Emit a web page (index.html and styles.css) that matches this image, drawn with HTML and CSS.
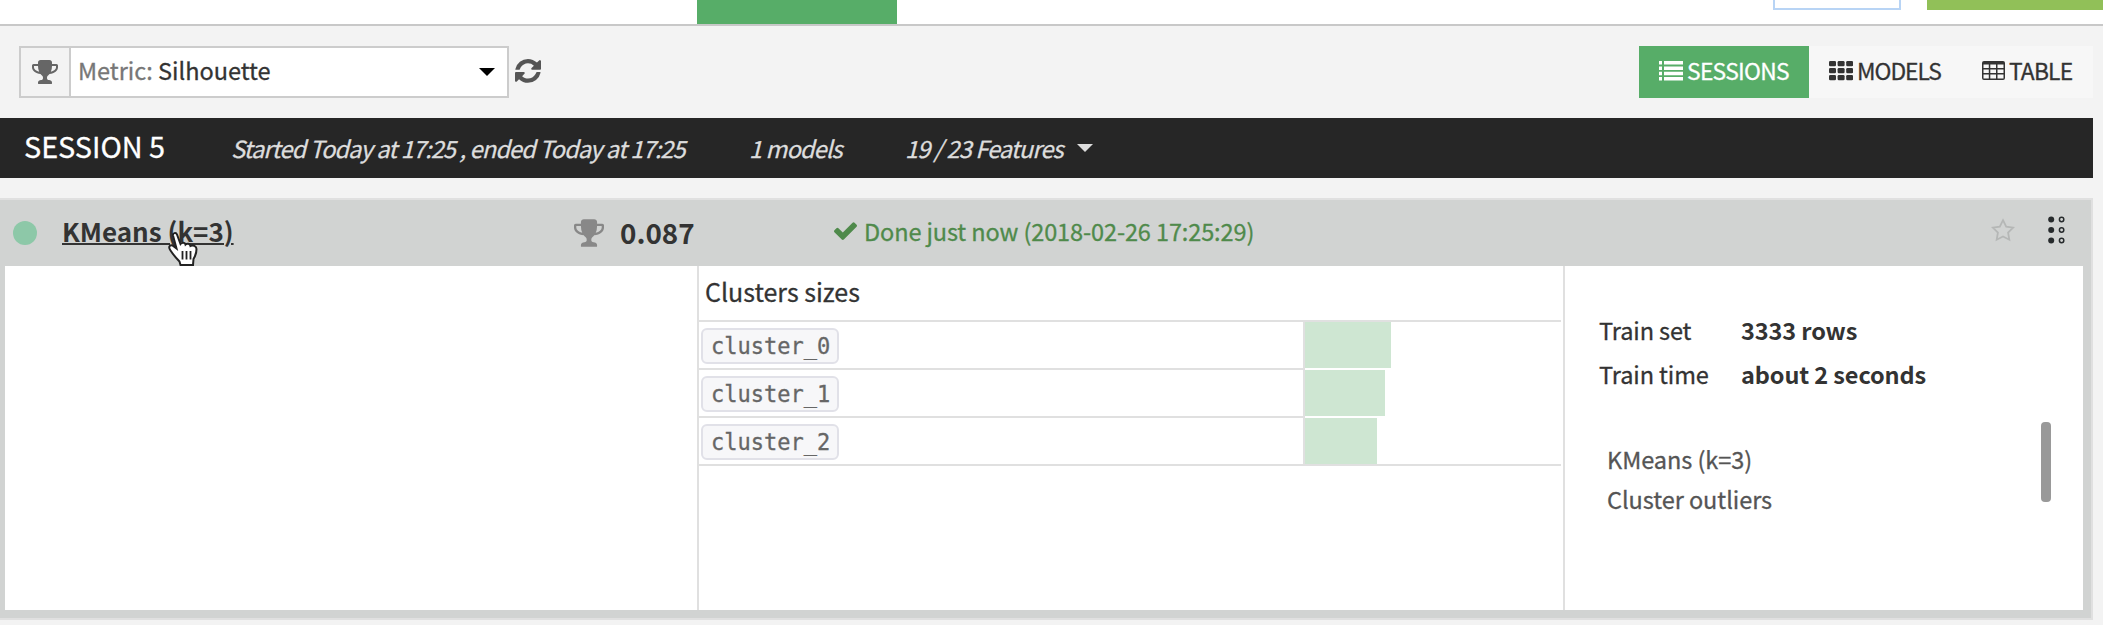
FILE: index.html
```html
<!DOCTYPE html>
<html lang="en">
<head>
<meta charset="utf-8">
<title>Sessions</title>
<link rel="stylesheet" href="styles.css">
</head>
<body>
<svg class="defs" width="0" height="0">
  <symbol id="trophy" viewBox="0 128 1664 1536"><path d="M458 883q-74-162-74-371h-256v96q0 78 94.500 162t235.500 113zM1536 608v-96h-256q0 209-74 371 141-29 235.500-113t94.500-162zM1664 480v128q0 71-41.500 143t-112 130-173 97.500-215.500 44.500q-42 54-95 95-38 34-52.500 72.500t-14.500 89.500q0 54 30.500 91t97.500 37q75 0 133.500 45.500t58.500 114.500v64q0 14-9 23t-23 9h-832q-14 0-23-9t-9-23v-64q0-69 58.500-114.500t133.500-45.500q67 0 97.500-37t30.500-91q0-51-14.500-89.500t-52.500-72.500q-53-41-95-95-113-5-215.500-44.500t-173-97.500-112-130-41.500-143v-128q0-40 28-68t68-28h288v-96q0-66 47-113t113-47h576q66 0 113 47t47 113v96h288q40 0 68 28t28 68z"/></symbol>
</svg>
<header class="topbar">
  <div class="tab"></div>
  <div class="outline-btn"></div>
  <div class="train-btn"></div>
</header>
<div class="toolbar">
  <div class="metric">
    <div class="metric-icon"><svg class="trophy-sm"><use href="#trophy"/></svg></div>
    <div class="metric-select"><span class="metric-text"><span class="muted">Metric:</span> Silhouette</span><span class="caret dark"></span></div>
  </div>
  <svg class="refresh" viewBox="0 128 1536 1536"><path d="M1511 928q0 5-1 7-64 268-268 434.500t-478 166.500q-146 0-282.500-55t-243.500-157l-129 129q-19 19-45 19t-45-19-19-45v-448q0-26 19-45t45-19h448q26 0 45 19t19 45-19 45l-137 137q71 66 161 102t187 36q134 0 250-65t186-179q11-17 53-117 8-23 30-23h192q13 0 22.500 9.500t9.500 22.500zM1536 256v448q0 26-19 45t-45 19h-448q-26 0-45-19t-19-45 19-45l138-138q-148-137-349-137-134 0-250 65t-186 179q-11 17-53 117-8 23-30 23h-199q-13 0-22.500-9.500t-9.500-22.500v-7q65-268 270-434.500t480-166.500q146 0 284 55.500t245 156.500l130-129q19-19 45-19t45 19 19 45z"/></svg>
  <nav class="views">
    <div class="view v-sessions active"><svg width="24" height="20" viewBox="0 0 24 20"><path d="M0 0h3v3.500H0zM5 0h19v3.500H5zM0 5.500h3V9H0zM5 5.500h19V9H5zM0 10.800h3v3.500H0zM5 10.800h19v3.500H5zM0 16h3v3.500H0zM5 16h19v3.500H5z"/></svg><span>SESSIONS</span></div>
    <div class="view v-models"><svg width="24" height="20" viewBox="0 0 24 20"><rect width="7" height="5.200" rx="1.300"/><rect x="8.600" width="7" height="5.200" rx="1.300"/><rect x="17.200" width="7" height="5.200" rx="1.300"/><rect y="7" width="7" height="5.200" rx="1.300"/><rect x="8.600" y="7" width="7" height="5.200" rx="1.300"/><rect x="17.200" y="7" width="7" height="5.200" rx="1.300"/><rect y="14" width="7" height="5.200" rx="1.300"/><rect x="8.600" y="14" width="7" height="5.200" rx="1.300"/><rect x="17.200" y="14" width="7" height="5.200" rx="1.300"/></svg><span>MODELS</span></div>
    <div class="view v-table"><svg width="23" height="20" viewBox="0 0 23 20"><path d="M2 0h19a2 2 0 0 1 2 2v15a2 2 0 0 1-2 2H2a2 2 0 0 1-2-2V2a2 2 0 0 1 2-2zM1.500 3.500v3.400h5.300V3.500zM8.300 3.500v3.400h5.700V3.500zM15.500 3.500v3.400h6V3.500zM1.500 8.400v3.500h5.300V8.400zM8.300 8.400v3.500h5.700V8.400zM15.500 8.400v3.500h6V8.400zM1.500 13.400v4h5.300v-4zM8.300 13.400v4h5.700v-4zM15.500 13.400v4h6v-4z" fill-rule="evenodd"/></svg><span>TABLE</span></div>
  </nav>
</div>
<div class="session">
  <span class="s-title">SESSION 5</span>
  <span class="s-time">Started Today at 17:25 , ended Today at 17:25</span>
  <span class="s-models">1 models</span>
  <span class="s-features">19 / 23 Features</span>
  <span class="caret light"></span>
</div>
<section class="card">
  <div class="card-head">
    <span class="dot"></span>
    <a class="name">KMeans (k=3)</a>
    <svg class="trophy-lg"><use href="#trophy"/></svg>
    <span class="score">0.087</span>
    <svg class="check" viewBox="121 310 1550 1212" preserveAspectRatio="none"><path d="M1671 566q0 40-28 68l-724 724-136 136q-28 28-68 28t-68-28l-136-136-362-362q-28-28-28-68t28-68l136-136q28-28 68-28t68 28l294 295 656-657q28-28 68-28t68 28l136 136q28 28 28 68z"/></svg>
    <span class="done">Done just now (2018-02-26 17:25:29)</span>
    <svg class="star" viewBox="0 0 24 24"><path d="M12 2.200l3.200 6.400 7 1-5.100 5 1.200 7.100-6.300-3.300-6.300 3.300 1.200-7.100-5.100-5 7-1z"/></svg>
    <svg class="grip" viewBox="0 0 17 28"><g class="solid"><circle cx="3.200" cy="3.500" r="3"/><circle cx="3.200" cy="14" r="3"/><circle cx="3.200" cy="24.500" r="3"/></g><g class="hollow"><circle cx="13.600" cy="3.500" r="2.200"/><circle cx="13.600" cy="14" r="2.200"/><circle cx="13.600" cy="24.500" r="2.200"/></g></svg>
    <svg class="cursor" viewBox="0 0 32 38"><path d="M6 5.500C5.500 3 9 2 10 4.500L13.500 14C15 12 18 12.500 18.500 14.500 20 13 23 13.500 23.500 16 26 14.500 29.500 16 29.500 19 29.500 23.500 28 26.500 26.500 29L26 35H13.500L12.500 31.500C10 29 6.500 25 3.500 20.500 1 17 2.500 14.500 5.500 15.500L9.500 18.500z"/><path class="lines" d="M15.500 21v8.500M19.500 21v8.500M23.500 21v8.500"/></svg>
  </div>
  <div class="card-body">
    <div class="blank"></div>
    <div class="clusters">
      <h3>Clusters sizes</h3>
      <div class="rows">
        <div class="row"><div class="label"><code><span>cluster_0</span></code></div><div class="bar" style="width:86px"></div></div>
        <div class="row"><div class="label"><code><span>cluster_1</span></code></div><div class="bar" style="width:80px"></div></div>
        <div class="row"><div class="label"><code><span>cluster_2</span></code></div><div class="bar" style="width:72px"></div></div>
      </div>
    </div>
    <div class="details">
      <div class="facts">
        <span>Train set</span><b>3333 rows</b>
        <span>Train time</span><b>about 2 seconds</b>
      </div>
      <div class="tags">
        <div>KMeans (k=3)</div>
        <div>Cluster outliers</div>
      </div>
      <div class="thumb"></div>
    </div>
  </div>
</section>
</body>
</html>
```
FILE: styles.css
```css
* { box-sizing: border-box; }
body {
  margin: 0;
  width: 2103px;
  height: 625px;
  overflow: hidden;
  background: #f3f3f3;
  color: #333;
  font: 23.500px/32px "Noto Sans CJK SC", sans-serif;
  -webkit-text-stroke: 0.3px currentColor;
  white-space: nowrap;
}
svg { display: block; flex: none; }
.defs { position: absolute; }
.topbar { display: flex; height: 26px; background: #fff; border-bottom: 2px solid #c8c8c8; }
.tab { width: 200px; height: 24px; margin-left: 697px; background: #57ad68; }
.outline-btn { width: 128px; height: 10px; margin-left: 876px; border: 2px solid #b8d4f5; border-top: 0; }
.train-btn { width: 176px; height: 10px; margin-left: 26px; background: #91c058; }

.toolbar { display: flex; align-items: center; height: 92px; padding: 0 10px 0 19px; }
.metric { display: flex; width: 490px; height: 52px; border: 2px solid #ccc; }
.metric-icon { display: flex; align-items: center; justify-content: center; width: 50px; border-right: 2px solid #ccc; }
.trophy-sm { width: 26px; height: 24px; fill: #666; }
.metric-select { display: flex; flex: 1; align-items: center; justify-content: space-between; padding: 0 12px 0 7px; background: #fff; }
.metric-text { padding-bottom: 4px; }
.muted { color: #777; }
.caret { width: 16px; height: 8px; clip-path: polygon(0 0, 100% 0, 50% 100%); }
.dark { background: #000; }
.light { background: #ddd; }
.refresh { width: 26px; height: 26px; margin-left: 6px; fill: #555; }
.views { display: flex; margin-left: auto; height: 52px; background: #f7f7f7; }
.view { display: flex; align-items: center; padding-left: 20px; fill: #333; font-size: 22.800px; }
.view svg { margin: 0 4px 2px 0; }
.view span { padding-bottom: 3px; }
.v-sessions { width: 170px; letter-spacing: -0.700px; }
.v-models { width: 153px; letter-spacing: -1px; }
.v-table { width: 131px; letter-spacing: -0.800px; }
.active { background: #57ad68; color: #fff; fill: #fff; }

.session { display: flex; align-items: center; width: 2093px; height: 60px; padding-left: 24px; background: #262626; color: #ddd; font-style: italic; letter-spacing: -0.860px; }
.s-title { width: 207px; padding-bottom: 4px; color: #fff; font-size: 28.800px; font-style: normal; letter-spacing: 0; }
.s-time { width: 518px; }
.s-models { width: 156px; }
.s-features { width: 172px; }

.card { width: 2093px; height: 422px; margin-top: 20px; padding-bottom: 8px; background: #d1d3d2; border: 2px solid #e0e0e0; border-left: 0; }
.card-head { position: relative; display: flex; align-items: center; height: 66px; padding-left: 13px; }
.dot { width: 24px; height: 24px; margin-right: 25px; border-radius: 50%; background: #8dc8a8; }
.name { width: 512px; padding-bottom: 4px; font-size: 26px; font-weight: 600; text-decoration: underline; text-decoration-thickness: 2px; -webkit-text-stroke: 0; }
.trophy-lg { width: 30px; height: 28px; fill: #888; }
.score { width: 214px; margin-left: 16px; padding-bottom: 3px; font-size: 27.800px; font-weight: 600; -webkit-text-stroke: 0; }
.check { width: 23px; height: 18px; margin-bottom: 4px; fill: #4f8a4b; }
.done { margin-left: 7px; padding-bottom: 5px; color: #4f8a4b; letter-spacing: -0.110px; }
.star { width: 24px; height: 24px; margin: 0 33px 6px auto; fill: none; stroke: #b5b7b6; stroke-width: 1.800; }
.grip { width: 17px; height: 28px; margin: 0 26px 6px 0; }
.solid { fill: #262a2c; }
.hollow { fill: none; stroke: #262a2c; stroke-width: 1.500; }
.cursor { position: absolute; left: 167px; top: 30px; width: 32px; height: 38px; fill: #fff; stroke: #222; stroke-width: 2; }
.lines { fill: none; stroke-width: 1.800; }

.card-body { display: flex; height: 344px; margin: 0 8px 0 5px; background: #fff; }
.blank { width: 692px; }
.clusters { width: 868px; padding-right: 2px; border: solid #e0e0e0; border-width: 0 2px; }
.clusters h3 { margin: 0; height: 54px; padding-left: 6px; font-size: 25px; font-weight: 400; line-height: 50px; }
.rows { border: solid #e0e0e0; border-width: 2px 0; }
.row { display: flex; height: 48px; }
.row:last-child { height: 46px; }
.label { display: flex; width: 606px; padding: 6px 0 0 2px; border: solid #e0e0e0; border-width: 0 2px 2px 0; }
.row:last-child .label { border-bottom: 0; }
.label code { width: 138px; height: 36px; padding-left: 8px; border: 2px solid #e1e1e8; border-radius: 6px; background: #f7f7f9; color: #666; font: 22px/31px "DejaVu Sans Mono", monospace; }
.label code span { display: inline-block; transform: scaleY(1.08); }
.bar { height: 46px; background: #cee6d2; }
.details { position: relative; flex: 1; padding: 42px 0 0 34px; }
.facts { display: grid; grid-template-columns: 142px 1fr; grid-auto-rows: 44px; line-height: 44px; letter-spacing: -0.100px; }
.facts b { -webkit-text-stroke: 0; }
.tags { padding: 43px 0 0 8px; color: #555; line-height: 40px; letter-spacing: -0.050px; }
.thumb { position: absolute; right: 32px; top: 156px; width: 10px; height: 80px; border-radius: 4px; background: #999; }
```
